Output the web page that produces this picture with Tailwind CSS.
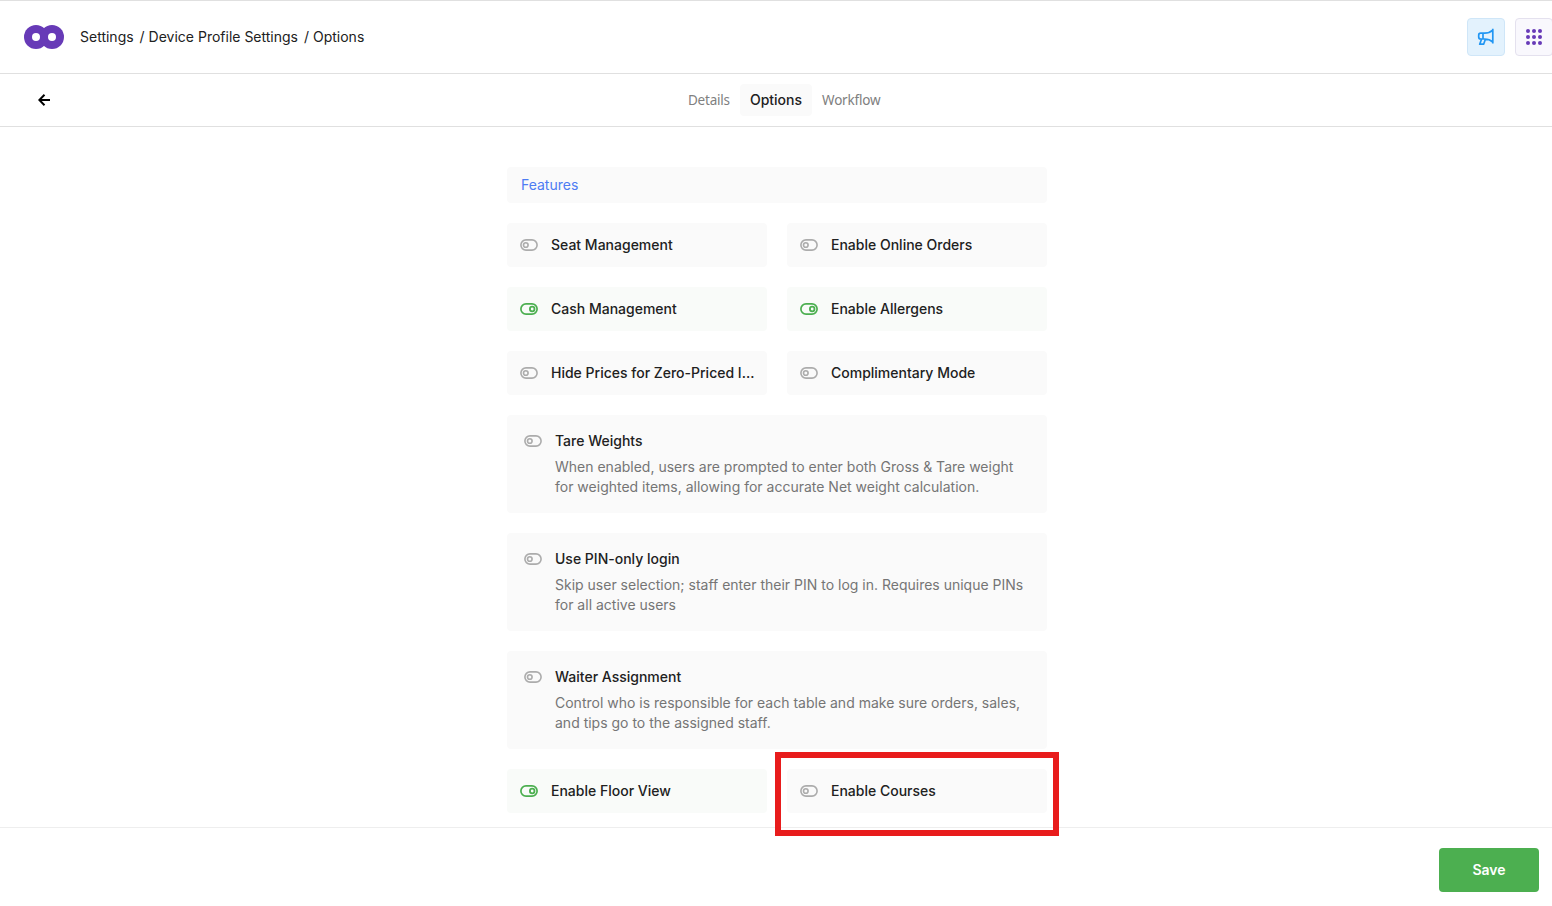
<!DOCTYPE html>
<html lang="en">
<head>
    <meta charset="UTF-8">
    <meta name="viewport" content="width=device-width, initial-scale=1.0">
    <title>Device Profile Settings - Options</title>
    <script src="https://cdn.jsdelivr.net/npm/@tailwindcss/browser@4"></script>
</head>
<body class="bg-white font-['Inter',sans-serif] text-sm text-[#212121]">

    <!-- toggle icons -->
    <svg class="hidden">
        <symbol id="off" viewBox="0 0 18 12">
            <rect x="0.9" y="0.9" width="16.2" height="10.2" rx="5.1" fill="none" stroke="currentColor" stroke-width="1.6"/>
            <circle cx="5.8" cy="6" r="2.3" fill="none" stroke="currentColor" stroke-width="1.6"/>
        </symbol>
        <symbol id="on" viewBox="0 0 18 12">
            <rect x="0.9" y="0.9" width="16.2" height="10.2" rx="5.1" fill="none" stroke="currentColor" stroke-width="1.7"/>
            <circle cx="12.2" cy="6" r="2.3" fill="none" stroke="currentColor" stroke-width="1.8"/>
        </symbol>
    </svg>

    <div class="flex h-screen flex-col overflow-hidden border-t border-[#e0e0e0]">
        <header class="flex h-[73px] shrink-0 items-center border-b border-[#e0e0e0] pl-6">
            <svg class="h-6 w-10" viewBox="0 0 40 24">
                <circle cx="12" cy="12" r="12" fill="#673ab7"/>
                <circle cx="28" cy="12" r="12" fill="#673ab7"/>
                <circle cx="12" cy="12" r="4" fill="#fff"/>
                <circle cx="28" cy="12" r="4" fill="#fff"/>
            </svg>
            <nav class="ml-4 flex">
                <span>Settings</span>
                <span class="ml-1.5">/ Device Profile Settings</span>
                <span class="ml-1.5">/ Options</span>
            </nav>
            <div class="-mr-px ml-auto flex gap-2.5">
                <button class="flex size-[38px] items-center justify-center rounded border border-[#cfe6f8] bg-[#e3f2fd]">
                    <svg class="size-[18px]" viewBox="0 0 18 18" fill="none" stroke="#2196f3" stroke-width="1.7" stroke-linejoin="round">
                        <path d="M15.800 0.800v14.800M15.800 2.200C13.600 4.200 11 5.200 7.500 5.200H3.700a2 2 0 0 0-2 2v1.800a2 2 0 0 0 2 2h3.800c3.500 0 6.100 1 8.300 3M6 5.200v5.800M4.600 11 2.700 16.200h3.900l1.900-5.200"/>
                    </svg>
                </button>
                <button class="flex size-[38px] items-center justify-center rounded border border-[#e4e1ee] bg-[#f9f8fd]">
                    <svg class="size-4" viewBox="0 0 16 16" fill="#673ab7">
                        <circle cx="2" cy="2" r="2"/><circle cx="8" cy="2" r="2"/><circle cx="14" cy="2" r="2"/>
                        <circle cx="2" cy="8" r="2"/><circle cx="8" cy="8" r="2"/><circle cx="14" cy="8" r="2"/>
                        <circle cx="2" cy="14" r="2"/><circle cx="8" cy="14" r="2"/><circle cx="14" cy="14" r="2"/>
                    </svg>
                </button>
            </div>
        </header>

        <div class="grid h-[53px] shrink-0 grid-cols-[1fr_auto_1fr] items-center border-b border-[#e0e0e0]">
            <svg class="ml-[38px] size-3" viewBox="0 0 12 12" fill="none" stroke="#000" stroke-width="2">
                <path d="M12 6H1.500M6.500 0.700 1.300 6l5.200 5.300"/>
            </svg>
            <div class="flex translate-x-[9px] items-center text-[#808080]">
                <span class="w-[62px] whitespace-nowrap pt-0.5 pl-2.5 font-['Noto_Sans',sans-serif] text-[13.5px] tracking-[-0.2px]">Details</span>
                <span class="rounded bg-[#fafafa] px-2.5 py-1.5 font-medium text-[#212121]">Options</span>
                <span class="w-[80px] whitespace-nowrap pt-0.5 pl-2.5 font-['Noto_Sans',sans-serif] text-[13.5px] tracking-[-0.2px]">Workflow</span>
            </div>
        </div>

        <main class="min-h-0 flex-1 pt-10">
            <div class="ml-[507px] grid w-[540px] grid-cols-2 gap-5 font-medium">
                <div class="col-span-2 flex h-9 items-center rounded bg-[#fafafa] px-3.5 font-normal text-[#4d7cf3]">Features</div>

                <div class="flex h-11 items-center gap-[13px] rounded bg-[#fafafa] px-[13px]">
                    <svg class="h-3 w-[18px] shrink-0 text-[#acacac]"><use href="#off"/></svg>
                    <span class="truncate">Seat Management</span>
                </div>
                <div class="flex h-11 items-center gap-[13px] rounded bg-[#fafafa] px-[13px]">
                    <svg class="h-3 w-[18px] shrink-0 text-[#acacac]"><use href="#off"/></svg>
                    <span class="truncate">Enable Online Orders</span>
                </div>
                <div class="flex h-11 items-center gap-[13px] rounded bg-[#f9fbf9] px-[13px]">
                    <svg class="h-3 w-[18px] shrink-0 text-[#4caf50]"><use href="#on"/></svg>
                    <span class="truncate">Cash Management</span>
                </div>
                <div class="flex h-11 items-center gap-[13px] rounded bg-[#f9fbf9] px-[13px]">
                    <svg class="h-3 w-[18px] shrink-0 text-[#4caf50]"><use href="#on"/></svg>
                    <span class="truncate">Enable Allergens</span>
                </div>
                <div class="flex h-11 items-center gap-[13px] rounded bg-[#fafafa] pl-[13px]">
                    <svg class="h-3 w-[18px] shrink-0 text-[#acacac]"><use href="#off"/></svg>
                    <span class="whitespace-nowrap">Hide Prices for Zero-Priced I…</span>
                </div>
                <div class="flex h-11 items-center gap-[13px] rounded bg-[#fafafa] px-[13px]">
                    <svg class="h-3 w-[18px] shrink-0 text-[#acacac]"><use href="#off"/></svg>
                    <span class="truncate">Complimentary Mode</span>
                </div>

                <div class="col-span-2 flex h-[98px] gap-[13px] rounded bg-[#fafafa] px-[17px] pt-4">
                    <svg class="mt-1 h-3 w-[18px] shrink-0 text-[#acacac]"><use href="#off"/></svg>
                    <div>
                        <h3>Tare Weights</h3>
                        <p class="mt-1.5 font-normal text-[#757575]">When enabled, users are prompted to enter both Gross &amp; Tare weight<br>for weighted items, allowing for accurate Net weight calculation.</p>
                    </div>
                </div>
                <div class="col-span-2 flex h-[98px] gap-[13px] rounded bg-[#fafafa] px-[17px] pt-4">
                    <svg class="mt-1 h-3 w-[18px] shrink-0 text-[#acacac]"><use href="#off"/></svg>
                    <div>
                        <h3>Use PIN-only login</h3>
                        <p class="mt-1.5 font-normal text-[#757575]">Skip user selection; staff enter their PIN to log in. Requires unique PINs<br>for all active users</p>
                    </div>
                </div>
                <div class="col-span-2 flex h-[98px] gap-[13px] rounded bg-[#fafafa] px-[17px] pt-4">
                    <svg class="mt-1 h-3 w-[18px] shrink-0 text-[#acacac]"><use href="#off"/></svg>
                    <div>
                        <h3>Waiter Assignment</h3>
                        <p class="mt-1.5 font-normal text-[#757575]">Control who is responsible for each table and make sure orders, sales,<br>and tips go to the assigned staff.</p>
                    </div>
                </div>

                <div class="flex h-11 items-center gap-[13px] rounded bg-[#f9fbf9] px-[13px]">
                    <svg class="h-3 w-[18px] shrink-0 text-[#4caf50]"><use href="#on"/></svg>
                    <span class="truncate">Enable Floor View</span>
                </div>
                <div class="relative flex h-11 items-center gap-[13px] rounded bg-[#fafafa] px-[13px]">
                    <svg class="h-3 w-[18px] shrink-0 text-[#acacac]"><use href="#off"/></svg>
                    <span class="truncate">Enable Courses</span>
                    <!-- highlight box -->
                    <div class="absolute -inset-x-3 -top-[17px] -bottom-[23px] z-10 border-6 border-[#e81c1c]"></div>
                </div>
            </div>
        </main>

        <footer class="flex h-[79px] shrink-0 items-start justify-end border-t border-[#eeeeee] pt-5 pr-[13px]">
            <button class="h-11 w-[100px] rounded bg-[#4caf50] font-semibold text-white">Save</button>
        </footer>
    </div>

</body>
</html>
